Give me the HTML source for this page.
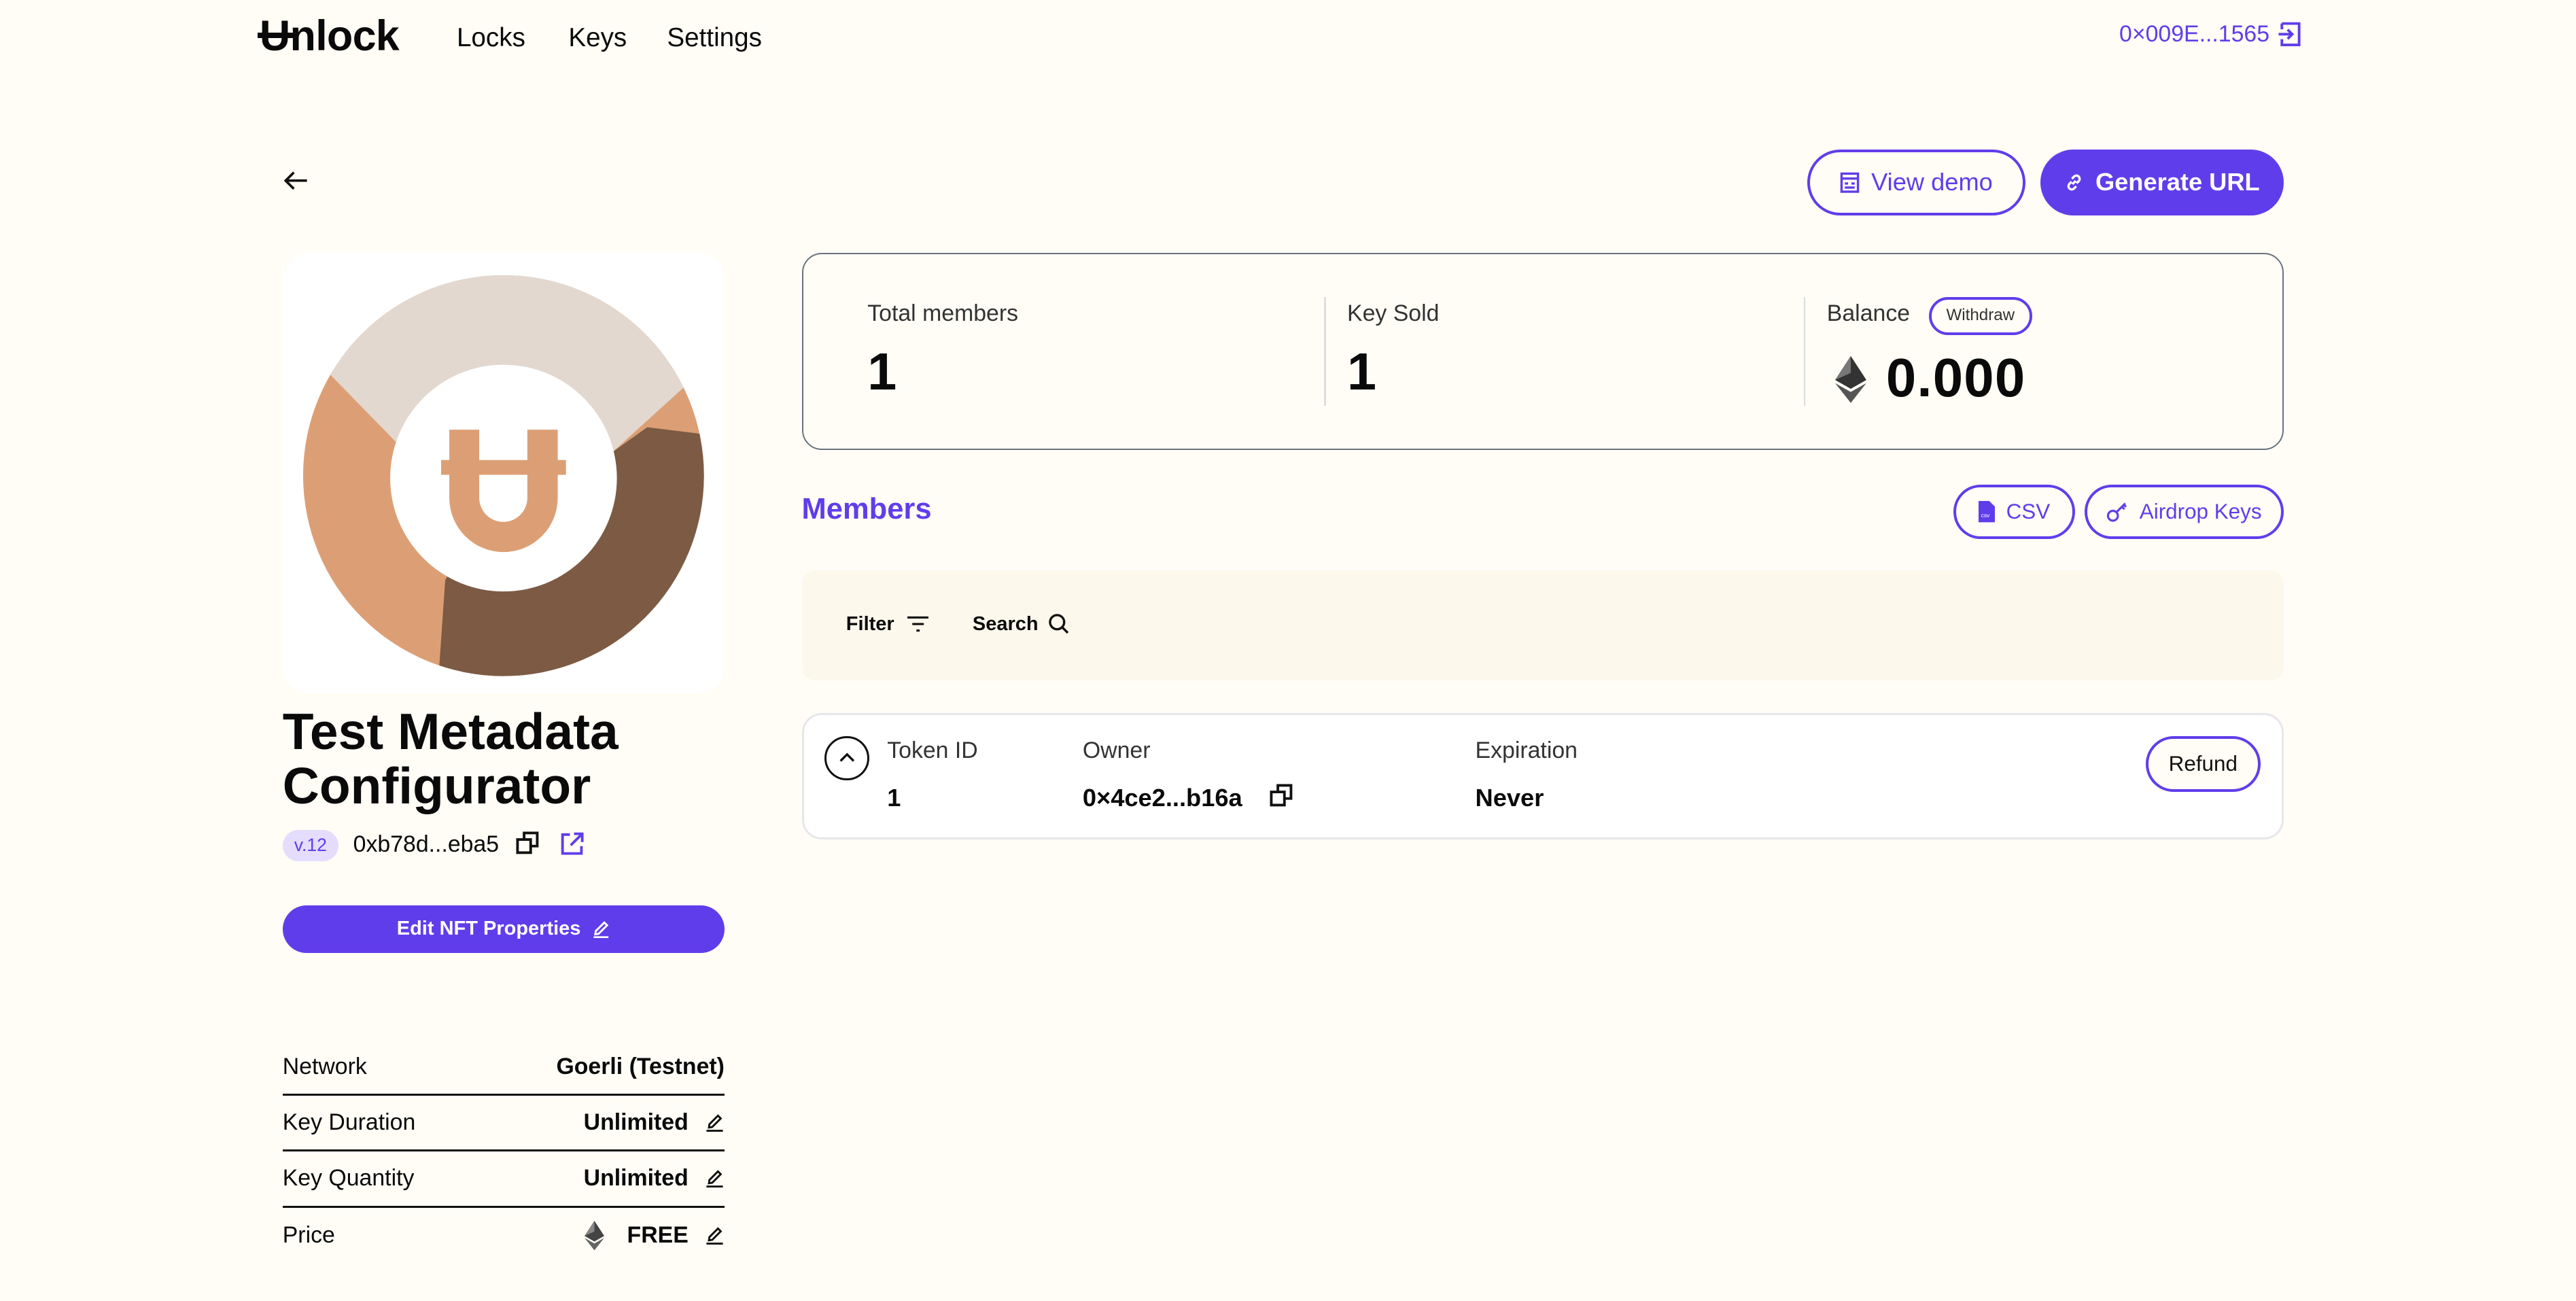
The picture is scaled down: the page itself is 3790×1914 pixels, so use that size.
<!DOCTYPE html>
<html><head><meta charset="utf-8"><style>
html,body{margin:0;padding:0;background:#fffdf6;}
body{zoom:2.41709;width:1568px;height:792px;overflow:hidden;position:relative;font-family:"Liberation Sans",sans-serif;color:#0a0a0a;}
.a{position:absolute;white-space:nowrap;}
.p{color:#603deb;}
.btn{position:absolute;box-sizing:border-box;border-radius:999px;display:flex;align-items:center;justify-content:center;gap:7px;font-weight:bold;}
.ol{border:2px solid #603deb;color:#603deb;background:#fffdf6;}
.fl{background:#603deb;color:#fff;}
.row{position:absolute;left:172px;width:269px;height:34px;border-bottom:1.5px solid #111;box-sizing:border-box;font-size:14px;display:flex;align-items:center;justify-content:space-between;}
.row b{display:flex;align-items:center;gap:10px;}
</style></head><body>

<div class="a" style="left:158px;top:7px;font-size:26px;font-weight:bold;letter-spacing:-0.3px">Unlock</div>
<div class="a" style="left:157px;top:20px;width:22px;height:3px;background:#0a0a0a"></div>
<div class="a" style="left:278px;top:14px;font-size:16px">Locks</div>
<div class="a" style="left:346px;top:14px;font-size:16px">Keys</div>
<div class="a" style="left:406px;top:14px;font-size:16px">Settings</div>
<div class="a p" style="left:1290px;top:13px;font-size:14px">0×009E...1565</div>
<svg class="a" style="left:1386px;top:13px" width="16" height="16" viewBox="0 0 16 16" fill="none" stroke="#603deb" stroke-width="1.6"><path d="M3 1.5h10.5v13H3V11M3 5V1.5M1 8h8M6.5 5.2 9.3 8 6.5 10.8"/></svg>

<svg class="a" style="left:171px;top:101px" width="18" height="18" viewBox="0 0 18 18" fill="none" stroke="#111" stroke-width="1.5"><path d="M16 9H3M8 4 3 9l5 5"/></svg>

<div class="btn ol" style="left:1100px;top:91px;width:133px;height:40px;font-size:15px;font-weight:normal"><svg width="12" height="13" viewBox="0 0 12 13" fill="none" stroke="#603deb" stroke-width="1.4"><rect x="1" y="1" width="10" height="11"/><path d="M1 4h10M3 7h2M7 7h2M3 9.5h6"/></svg>View demo</div>
<div class="btn fl" style="left:1242px;top:91px;width:148px;height:40px;font-size:15px"><svg width="12" height="12" viewBox="0 0 12 12" fill="none" stroke="#fff" stroke-width="1.4"><path d="M5 7 7 5M4.5 5.5 3 7a2 2 0 0 0 2.8 2.8l1.5-1.5M7.5 6.5 9 5a2 2 0 0 0-2.8-2.8L4.7 3.7"/></svg>Generate URL</div>

<div class="a" style="left:172px;top:154px;width:269px;height:268px;background:#fff;border-radius:16px"></div>
<svg class="a" style="left:0;top:0" width="600" height="450" viewBox="0 0 600 450">
<defs><clipPath id="d"><circle cx="306.5" cy="289.5" r="122"/></clipPath></defs>
<g clip-path="url(#d)">
<rect x="150" y="150" width="320" height="300" fill="#dc9f75"/>
<polygon points="200,227 242,270 307,293 373,275 416,236 460,150 150,150" fill="#e3d8cf"/>
<polygon points="373,275 394,260 426,264 460,264 460,440 267,440 267,411 271,353 307,293" fill="#7c5a44"/>
</g>
<circle cx="306.5" cy="291" r="69" fill="#fff"/>
<path d="M273.5 261.5V303a33 33 0 0 0 66 0V261.5H321V303a14.65 14.65 0 0 1-29.3 0V261.5Z" fill="#dc9f75"/>
<rect x="268.5" y="280" width="76" height="9" fill="#dc9f75"/>
</svg>

<div class="a" style="left:172px;top:429px;font-size:31px;font-weight:bold;line-height:33px;white-space:normal;width:290px">Test Metadata Configurator</div>
<div class="a p" style="left:172px;top:505px;width:34px;height:19px;border-radius:10px;background:#e4ddfd;font-size:11px;line-height:19px;text-align:center">v.12</div>
<div class="a" style="left:215px;top:506px;font-size:14px">0xb78d...eba5</div>
<svg class="a" style="left:314px;top:506px" width="15" height="15" viewBox="0 0 15 15" fill="none" stroke="#111" stroke-width="1.6"><rect x="1" y="5" width="8" height="8"/><path d="M5 5V1h8v8H9"/></svg>
<svg class="a" style="left:341px;top:506px" width="15" height="15" viewBox="0 0 15 15" fill="none" stroke="#603deb" stroke-width="1.6"><path d="M6 2H1.5v11.5H13V9M8.5 1.5H13.5V6.5M13.5 1.5 6.5 8.5"/></svg>

<div class="btn fl" style="left:172px;top:551px;width:269px;height:29px;font-size:12px">Edit NFT Properties <svg width="11" height="11" viewBox="0 0 11 11" fill="none" stroke="#fff" stroke-width="1.2"><path d="M1 10.3h9M2 8.5 2.3 6.5 7.5 1.3 9.2 3 4 8.2Z"/></svg></div>

<div class="row" style="top:633px"><span>Network</span><b>Goerli (Testnet)</b></div>
<div class="row" style="top:667px"><span>Key Duration</span><b>Unlimited <svg width="12" height="12" viewBox="0 0 12 12" fill="none" stroke="#111" stroke-width="1.2"><path d="M1 11h10M2.5 9 2.8 7 8 1.8 9.7 3.5 4.5 8.7Z"/></svg></b></div>
<div class="row" style="top:701px"><span>Key Quantity</span><b>Unlimited <svg width="12" height="12" viewBox="0 0 12 12" fill="none" stroke="#111" stroke-width="1.2"><path d="M1 11h10M2.5 9 2.8 7 8 1.8 9.7 3.5 4.5 8.7Z"/></svg></b></div>
<div class="row" style="top:735px;border:none"><span>Price</span><b><svg width="12" height="18" viewBox="0 0 12 18"><path d="M6 0 0 9.2 6 12.6 12 9.2Z" fill="#444"/><path d="M6 0 0 9.2 6 6.5Z" fill="#888"/><path d="M6 13.8 0 10.4 6 18 12 10.4Z" fill="#666"/></svg><span style="margin-left:4px">FREE</span><svg width="12" height="12" viewBox="0 0 12 12" fill="none" stroke="#111" stroke-width="1.2"><path d="M1 11h10M2.5 9 2.8 7 8 1.8 9.7 3.5 4.5 8.7Z"/></svg></b></div>

<div class="a" style="left:488px;top:154px;width:902px;height:120px;box-sizing:border-box;border:1px solid #6b7280;border-radius:12px"></div>
<div class="a" style="left:806px;top:181px;width:1px;height:66px;background:#ddd"></div>
<div class="a" style="left:1098px;top:181px;width:1px;height:66px;background:#ddd"></div>
<div class="a" style="left:528px;top:183px;font-size:14px;color:#333">Total members</div>
<div class="a" style="left:528px;top:208px;font-size:32px;font-weight:bold">1</div>
<div class="a" style="left:820px;top:183px;font-size:14px;color:#333">Key Sold</div>
<div class="a" style="left:820px;top:208px;font-size:32px;font-weight:bold">1</div>
<div class="a" style="left:1112px;top:183px;font-size:14px;color:#333">Balance</div>
<div class="a" style="left:1174px;top:181px;width:63px;height:23px;box-sizing:border-box;border:2px solid #603deb;border-radius:12px;font-size:10px;line-height:19px;text-align:center;color:#333">Withdraw</div>
<svg class="a" style="left:1117px;top:216px" width="19" height="30" viewBox="0 0 12 18"><path d="M6 0 0 9.2 6 12.6 12 9.2Z" fill="#333"/><path d="M6 0 0 9.2 6 6.5Z" fill="#777"/><path d="M6 13.8 0 10.4 6 18 12 10.4Z" fill="#555"/></svg>
<div class="a" style="left:1148px;top:211px;font-size:33px;font-weight:bold;letter-spacing:0.5px">0.000</div>

<div class="a p" style="left:488px;top:300px;font-size:18px;font-weight:bold">Members</div>
<div class="btn ol" style="left:1189px;top:295px;width:74px;height:33px;font-size:13px;font-weight:normal"><svg width="10" height="13" viewBox="0 0 10 13"><path d="M0 0h6.5L10 3.5V13H0Z" fill="#603deb"/><text x="1.5" y="10" font-size="3.5" fill="#fff" font-family="Liberation Sans">csv</text></svg>CSV</div>
<div class="btn ol" style="left:1269px;top:295px;width:121px;height:33px;font-size:13px;font-weight:normal"><svg width="13" height="13" viewBox="0 0 13 13" fill="none" stroke="#603deb" stroke-width="1.3"><circle cx="4" cy="9" r="3"/><path d="M6 7 11.5 1.5M9.5 3.5 11 5M10.7 2.3 12 3.6"/></svg>Airdrop Keys</div>

<div class="a" style="left:488px;top:347px;width:902px;height:67px;background:#fcf8ec;border-radius:8px"></div>
<div class="a" style="left:515px;top:373px;font-size:12px;font-weight:bold;display:flex;align-items:center;gap:8px">Filter <svg width="13" height="10" viewBox="0 0 13 10" fill="none" stroke="#111" stroke-width="1.3"><path d="M0 1h13M3 5h7M5.5 9h2"/></svg></div>
<div class="a" style="left:592px;top:373px;font-size:12px;font-weight:bold;display:flex;align-items:center;gap:6px">Search <svg width="13" height="13" viewBox="0 0 13 13" fill="none" stroke="#111" stroke-width="1.4"><circle cx="5.5" cy="5.5" r="4.3"/><path d="M8.7 8.7 12 12"/></svg></div>

<div class="a" style="left:488px;top:434px;width:902px;height:77px;box-sizing:border-box;background:#fff;border:1.5px solid #e7e7ea;border-radius:12px"></div>
<div class="a" style="left:502px;top:448px;width:27px;height:27px;box-sizing:border-box;border:1.5px solid #111;border-radius:50%"></div>
<svg class="a" style="left:510px;top:457px" width="11" height="8" viewBox="0 0 11 8" fill="none" stroke="#111" stroke-width="1.4"><path d="M1.5 6 5.5 2 9.5 6"/></svg>
<div class="a" style="left:540px;top:449px;font-size:14px;color:#333">Token ID</div>
<div class="a" style="left:540px;top:477px;font-size:15px;font-weight:bold">1</div>
<div class="a" style="left:659px;top:449px;font-size:14px;color:#333">Owner</div>
<div class="a" style="left:659px;top:477px;font-size:15px;font-weight:bold">0×4ce2...b16a</div>
<svg class="a" style="left:773px;top:477px" width="15" height="15" viewBox="0 0 15 15" fill="none" stroke="#111" stroke-width="1.6"><rect x="1" y="5" width="8" height="8"/><path d="M5 5V1h8v8H9"/></svg>
<div class="a" style="left:898px;top:449px;font-size:14px;color:#333">Expiration</div>
<div class="a" style="left:898px;top:477px;font-size:15px;font-weight:bold">Never</div>
<div class="btn ol" style="left:1306px;top:448px;width:70px;height:34px;font-size:13px;font-weight:normal;color:#111">Refund</div>

</body></html>
